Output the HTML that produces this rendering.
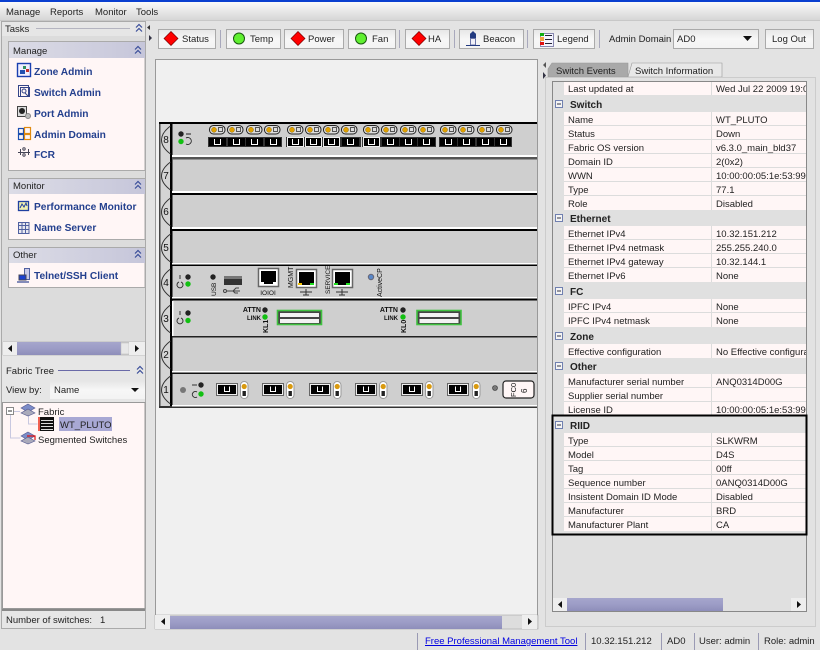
<!DOCTYPE html>
<html><head><meta charset="utf-8"><title>Web Tools</title>
<style>
html,body{margin:0;padding:0}
body{width:820px;height:650px;overflow:hidden;position:relative;background:#e3e3e3;font:9.5px "Liberation Sans",Arial,sans-serif;color:#222}
svg.g{position:absolute;left:0;top:0}
.t{position:absolute;white-space:nowrap;line-height:13px;height:13px;margin-top:1px}
.l{font-weight:bold;color:#24408e;font-size:10.2px}
.h{font-weight:bold;font-size:10px}
svg text{font-family:"Liberation Sans",Arial,sans-serif}
</style></head>
<body>
<svg class="g" width="820" height="650" viewBox="0 0 820 650">
<defs>
<linearGradient id="bar" x1="0" y1="0" x2="0" y2="1"><stop offset="0" stop-color="#fafafa"/><stop offset="1" stop-color="#d6d6d6"/></linearGradient>
<linearGradient id="btn" x1="0" y1="0" x2="0" y2="1"><stop offset="0" stop-color="#e6e6e6"/><stop offset=".5" stop-color="#f7f7f7"/><stop offset="1" stop-color="#f3f3f3"/></linearGradient>
<linearGradient id="hd" x1="0" y1="0" x2="1" y2="0"><stop offset="0" stop-color="#dcdce6"/><stop offset="1" stop-color="#c6c6da"/></linearGradient>
<linearGradient id="th" x1="0" y1="0" x2="0" y2="1"><stop offset="0" stop-color="#a6a6cc"/><stop offset=".5" stop-color="#9c9cc6"/><stop offset="1" stop-color="#8e8eba"/></linearGradient>
<g id="chev"><path d="M-3 -.5l3-3 3 3M-3 3.500l3-3 3 3" fill="none" stroke="#3a4e9a" stroke-width="1.2"/></g>
<g id="cap"><rect x=".5" y=".5" width="15.500" height="8.500" rx="4" fill="#ddd" stroke="#222"/><circle cx="5" cy="4.800" r="2.500" fill="#e0a000" stroke="#8a6a10" stroke-width=".5"/><rect x="9.500" y="2.500" width="4" height="4" fill="none" stroke="#333" stroke-width=".8"/></g>
<g id="u"><path d="M-3 -3.500v5.500h6v-5.500" fill="none" stroke="#fff"/></g>
<g id="ld"><circle r="2.700" fill="#222"/></g>
<g id="gd"><circle r="2.700" fill="#12c012"/></g>
<g id="tab"><path d="M11 0C7 3 2 8 2 14s5 11 9 14" fill="none" stroke="#333"/></g>
<g id="fp"><rect x=".5" y=".5" width="21" height="12" fill="#000" stroke="#666"/><rect x="1.500" y="1.500" width="19" height="10" fill="none" stroke="#eee"/><path d="M8.500 3.500v5h5v-5" fill="none" stroke="#fff"/></g>
<g id="vc"><rect x=".5" y=".5" width="7.500" height="17" rx="3.700" fill="#fff" stroke="#999"/><circle cx="4.200" cy="5.500" r="2.600" fill="#d99a10"/><rect x="2.500" y="10" width="3.400" height="5" fill="#222"/></g>
<g id="q"><rect x=".5" y=".5" width="44" height="14" fill="#444" stroke="#3fc23f" stroke-width="1.600"/><rect x="3" y="3" width="39" height="4" fill="#f2f2f2"/><rect x="3" y="9" width="39" height="4" fill="#f2f2f2"/></g>
<g id="jk"><rect x=".5" y=".5" width="20" height="18" fill="#fff" stroke="#666" stroke-width="1.500"/><path d="M3 3h15v11h-3v2h-9v-2h-3z" fill="#000"/></g>
<path id="dia" d="M0 -7L7 0L0 7L-7 0Z" fill="#f00" stroke="#700" stroke-width=".7"/>
<circle id="grn" r="5.500" fill="#60f030" stroke="#1a5a10"/>
</defs>

<!-- title + menu -->
<rect width="820" height="2" fill="#0a3fd0"/>
<rect y="2" width="820" height="18" fill="url(#bar)"/>
<rect y="20" width="820" height="1" fill="#c8c8c8"/>

<!-- left panel -->
<rect x="1.500" y="21.500" width="144" height="607" fill="#e6e6e6" stroke="#aaa"/>
<rect x="2" y="36" width="143" height="306" fill="#dcdcdc"/>
<line x1="36" y1="28.500" x2="130" y2="28.500" stroke="#b4b4c0"/>
<use href="#chev" x="139" y="28"/>
<rect x="8.500" y="41.500" width="136.500" height="129" fill="#fff6f6" stroke="#aaa"/>
<rect x="9" y="42" width="136" height="16" fill="url(#hd)"/>
<use href="#chev" x="138" y="50"/>
<rect x="8.500" y="178.500" width="136.500" height="61" fill="#fff6f6" stroke="#aaa"/>
<rect x="9" y="179" width="136" height="15" fill="url(#hd)"/>
<use href="#chev" x="138" y="185"/>
<rect x="8.500" y="247.500" width="136.500" height="40" fill="#fff6f6" stroke="#aaa"/>
<rect x="9" y="248" width="136" height="15" fill="url(#hd)"/>
<use href="#chev" x="138" y="254"/>

<!-- task icons -->
<g><rect x="17.500" y="63.500" width="13" height="13" fill="#eef" stroke="#1a3fb0" stroke-width="1.400"/><rect x="20" y="70" width="5" height="4" fill="#2050b0"/><rect x="23" y="66" width="3" height="3" fill="#309060"/><rect x="26" y="69" width="3" height="3" fill="#c03030"/></g>
<g fill="none" stroke="#334488"><rect x="18.500" y="85.500" width="10" height="11"/><rect x="20.500" y="87.500" width="9" height="9"/><circle cx="24" cy="91" r="2"/><path d="M25 93l3 3"/></g>
<g><rect x="17.500" y="106.500" width="9" height="10" fill="#ddd" stroke="#444"/><circle cx="22" cy="111" r="3" fill="#222"/><circle cx="28" cy="116" r="2.500" fill="#bbb" stroke="#888"/></g>
<g fill="none" stroke-width="1.200"><rect x="18.500" y="128.500" width="5" height="5" stroke="#1a4fb0"/><rect x="24.500" y="127.500" width="6" height="6" stroke="#e08a10"/><rect x="18.500" y="134.500" width="5" height="5" stroke="#1a4fb0"/><rect x="24.500" y="134.500" width="6" height="5" stroke="#e08a10"/></g>
<g stroke="#445" fill="none"><path d="M18 152.500h12M20.500 149v6M28.500 149v6"/><circle cx="24" cy="149" r="1.200"/><circle cx="24" cy="155" r="1.200"/></g>
<g fill="none"><rect x="18.500" y="201.500" width="10" height="9" fill="#f0f0b0" stroke="#2040a0" stroke-width="1.300"/><path d="M20 208l2-4 2 3 2-4 1 3" stroke="#2040a0"/></g>
<g fill="#e8e8f0" stroke="#5060a0"><rect x="18.500" y="222.500" width="10.500" height="11"/><path d="M18.500 225.500h10.500M22 222.500v11M25.500 222.500v11M18.500 229.500h10.500" fill="none"/></g>
<g><rect x="24.500" y="268.500" width="5" height="11" fill="#c8c8e8" stroke="#5060a0"/><rect x="19" y="275" width="7" height="5" fill="#1a3fd0" stroke="#445"/><path d="M17 282h12" stroke="#5060a0" stroke-width="1.400"/></g>

<!-- left scrollbar -->
<rect x="3" y="342" width="142" height="13" fill="#ddd" stroke="#999" stroke-width=".5"/>
<rect x="3" y="342" width="14" height="13" fill="#eee"/><path d="M12 345v7l-4-3.500z" fill="#111"/>
<rect x="17" y="342" width="104" height="13" fill="url(#th)"/>
<rect x="121" y="343" width="8" height="11" fill="#e8e8e8" stroke="#bbb" stroke-width=".5"/>
<rect x="129" y="342" width="16" height="13" fill="#eee"/><path d="M135 345v7l4-3.500z" fill="#111"/>
<!-- fabric tree -->
<line x1="58" y1="370.500" x2="130" y2="370.500" stroke="#6a6aa8"/>
<use href="#chev" x="140" y="370"/>
<rect x="50" y="381" width="95" height="18" fill="url(#btn)"/>
<path d="M131 388h8l-4 4z" fill="#111"/>
<rect x="2.500" y="402.500" width="142.500" height="206" fill="#fff6f6" stroke="#999"/>
<rect x="6.500" y="407.500" width="7" height="7" fill="#fff" stroke="#888"/><path d="M8 411h4" stroke="#333"/>
<path d="M14 411.500h6M28.500 415v9h9M10.500 415v23h10" fill="none" stroke="#c8c8e0"/>
<g fill="#7c8cc8" stroke="#555a90" stroke-width=".6"><path d="M28 404l7 4-7 4-7-4z"/><path d="M28 409l7 4-7 3-7-3z" fill="#aab"/></g>
<g fill="#7c8cc8" stroke="#555a90" stroke-width=".6"><path d="M28 432l7 4-7 4-7-4z"/><path d="M28 437l7 4-7 3-7-3z" fill="#aab"/></g>
<path d="M27 436h8v4" fill="none" stroke="#e01010" stroke-width="1.200"/>
<rect x="38" y="417" width="2" height="14" fill="#f06050"/><rect x="40" y="417" width="14" height="14" fill="#111"/><path d="M41 420.500h12M41 423.500h12M41 426.500h12M41 429.500h12" stroke="#ddd"/>
<rect x="59" y="417" width="53" height="14" fill="#a8a8d4"/>
<rect x="2" y="609" width="143" height="2" fill="#888"/>

<!-- toolbar -->
<g fill="url(#btn)" stroke="#aaa">
<rect x="158.500" y="29.500" width="57" height="19"/><rect x="226.500" y="29.500" width="54" height="19"/><rect x="284.500" y="29.500" width="59" height="19"/><rect x="348.500" y="29.500" width="47" height="19"/><rect x="405.500" y="29.500" width="44" height="19"/><rect x="459.500" y="29.500" width="64" height="19"/><rect x="533.500" y="29.500" width="61" height="19"/><rect x="673.500" y="29.500" width="85" height="19"/><rect x="765.500" y="29.500" width="48" height="19"/></g>
<g stroke="#a8a8bc"><path d="M220.500 30v18M399.500 30v18M454.500 30v18M527.500 30v18M599.500 30v18"/></g>
<path d="M150 25v5l-3-2.500z" fill="#333"/><path d="M149 35v6l3-3z" fill="#334"/>
<use href="#dia" x="171" y="38.500"/><use href="#grn" x="239" y="38.500"/><use href="#dia" x="298" y="38.500"/><use href="#grn" x="361" y="38.500"/><use href="#dia" x="419" y="38.500"/>
<g><path d="M473 31l2.500 2.500h-5z" fill="#223a80"/><rect x="470" y="33.500" width="6" height="4.500" fill="#223a80"/><rect x="470.500" y="38.500" width="5" height="6.500" fill="#f0f0f8" stroke="#6a74a8"/><path d="M466 45.500h14" stroke="#223a80"/></g>
<rect x="540.500" y="33.500" width="13" height="13" fill="#f4f4ff" stroke="#8888b0"/><rect x="540" y="33" width="4" height="3" fill="#10b010"/><rect x="540" y="37" width="4" height="4" fill="#f0a040"/><rect x="540" y="42" width="4" height="3" fill="#e01010"/><path d="M545 35.500h7M545 39.500h7M545 43.500h7" stroke="#223"/>
<path d="M743 36h9l-4.500 5z" fill="#111"/>

<!-- center -->
<rect x="155.500" y="59.500" width="382" height="569" fill="#f0f0f0" stroke="#999"/>
<rect x="155" y="615" width="383" height="14" fill="#ddd" stroke="#999" stroke-width=".5"/>
<rect x="155" y="615" width="15" height="14" fill="#eee"/><path d="M165 618v7l-4-3.500z" fill="#111"/>
<rect x="170" y="616" width="332" height="13" fill="url(#th)"/>
<rect x="522" y="615" width="15" height="14" fill="#eee"/><path d="M528 618v7l4-3.500z" fill="#111"/>

<!-- chassis -->
<rect x="159" y="122" width="378" height="286" fill="#cfcfcf"/>
<rect x="159" y="122" width="11" height="286" fill="#d4d4d4"/>
<rect x="159" y="122" width="1.500" height="286" fill="#444"/>
<rect x="159" y="122" width="378" height="2" fill="#000"/>
<rect x="170" y="122" width="2.500" height="286" fill="#000"/>
<rect x="172" y="155" width="365" height="2" fill="#fff"/><rect x="172" y="157" width="365" height="2.500" fill="#555"/>
<rect x="172" y="191" width="365" height="2" fill="#fff"/><rect x="172" y="193" width="365" height="2" fill="#000"/>
<rect x="172" y="227" width="365" height="2" fill="#fff"/><rect x="172" y="229" width="365" height="2" fill="#000"/>
<rect x="172" y="263" width="365" height="1.500" fill="#fff"/><rect x="172" y="264.500" width="365" height="1.500" fill="#000"/>
<rect x="172" y="297" width="365" height="1.500" fill="#fff"/><rect x="172" y="298.500" width="365" height="2" fill="#000"/>
<rect x="172" y="301" width="1.500" height="35" fill="#fff"/>
<rect x="172" y="336" width="365" height="1.500" fill="#222"/>
<rect x="172" y="371" width="365" height="1.500" fill="#fff"/><rect x="172" y="372.500" width="365" height="1.500" fill="#111"/>
<rect x="172" y="405" width="365" height="1.500" fill="#fff"/><rect x="172" y="406.500" width="365" height="1.500" fill="#333"/>
<rect x="159" y="406" width="13" height="2" fill="#333"/>
<g><use href="#tab" x="159.500" y="126"/><use href="#tab" x="159.500" y="162"/><use href="#tab" x="159.500" y="198"/><use href="#tab" x="159.500" y="234"/><use href="#tab" x="159.500" y="269"/><use href="#tab" x="159.500" y="305"/><use href="#tab" x="159.500" y="341"/><use href="#tab" x="159.500" y="376"/></g>
<g font-size="10" fill="#111" text-anchor="middle"><text x="166" y="143">8</text><text x="166" y="179">7</text><text x="166" y="215">6</text><text x="166" y="251">5</text><text x="166" y="286">4</text><text x="166" y="322">3</text><text x="166" y="358">2</text><text x="166" y="393">1</text></g>

<!-- slot 8 -->
<use href="#ld" x="181" y="134"/><use href="#gd" x="181" y="141.500"/>
<path d="M186 134h5M186 138a3.500 3.500 0 1 1 0 6" fill="none" stroke="#222" stroke-width=".9"/>
<g><use href="#cap" x="209" y="125"/><use href="#cap" x="227" y="125"/><use href="#cap" x="246" y="125"/><use href="#cap" x="264" y="125"/><use href="#cap" x="287" y="125"/><use href="#cap" x="305" y="125"/><use href="#cap" x="323" y="125"/><use href="#cap" x="341" y="125"/><use href="#cap" x="363" y="125"/><use href="#cap" x="381" y="125"/><use href="#cap" x="400" y="125"/><use href="#cap" x="418" y="125"/><use href="#cap" x="440" y="125"/><use href="#cap" x="458" y="125"/><use href="#cap" x="477" y="125"/><use href="#cap" x="496" y="125"/></g>
<rect x="208" y="137" width="74" height="10" fill="#333"/>
<rect x="286" y="137" width="75" height="10" fill="#333"/>
<rect x="362" y="137" width="74" height="10" fill="#333"/>
<rect x="439" y="137" width="73" height="10" fill="#333"/>
<g fill="#000"><rect x="209" y="138" width="17" height="8"/><rect x="228" y="138" width="17" height="8"/><rect x="246" y="138" width="17" height="8"/><rect x="265" y="138" width="16" height="8"/><rect x="287.500" y="137.500" width="16" height="9" stroke="#eee"/><rect x="305.500" y="137.500" width="16" height="9" stroke="#eee"/><rect x="323.500" y="137.500" width="16" height="9" stroke="#eee"/><rect x="342" y="138" width="17" height="8"/><rect x="363.500" y="137.500" width="16" height="9" stroke="#eee"/><rect x="382" y="138" width="17" height="8"/><rect x="400" y="138" width="17" height="8"/><rect x="418" y="138" width="17" height="8"/><rect x="440" y="138" width="17" height="8"/><rect x="458" y="138" width="17" height="8"/><rect x="477" y="138" width="17" height="8"/><rect x="495" y="138" width="16" height="8"/></g>
<g><use href="#u" x="217.500" y="142.500"/><use href="#u" x="236.500" y="142.500"/><use href="#u" x="254.500" y="142.500"/><use href="#u" x="273.500" y="142.500"/><use href="#u" x="295.500" y="142.500"/><use href="#u" x="313.500" y="142.500"/><use href="#u" x="331.500" y="142.500"/><use href="#u" x="350.500" y="142.500"/><use href="#u" x="371.500" y="142.500"/><use href="#u" x="390.500" y="142.500"/><use href="#u" x="408.500" y="142.500"/><use href="#u" x="426.500" y="142.500"/><use href="#u" x="448.500" y="142.500"/><use href="#u" x="466.500" y="142.500"/><use href="#u" x="485.500" y="142.500"/><use href="#u" x="503.500" y="142.500"/></g>

<!-- slot 4 -->
<use href="#ld" x="188" y="277"/><use href="#gd" x="188" y="284"/>
<path d="M180 275v4M181 282a3 3 0 1 1-2 0" fill="none" stroke="#333"/>
<use href="#ld" x="213" y="277"/>
<text transform="translate(216 296) rotate(-90)" font-size="6.500" fill="#111">USB</text>
<rect x="224" y="276" width="18" height="9" fill="#333"/><rect x="224" y="276" width="18" height="3" fill="#777"/>
<path d="M226 291h14M233 291l3-3h3M233 291l2 2h3" fill="none" stroke="#444"/><circle cx="225" cy="291" r="1.500" fill="none" stroke="#444"/>
<use href="#jk" x="258" y="268"/>
<text x="268" y="295" font-size="6.500" text-anchor="middle" fill="#111">IOIOI</text>
<text transform="translate(293 288) rotate(-90)" font-size="7" fill="#111">MGMT</text>
<use href="#jk" x="296" y="269"/><rect x="298" y="283" width="4" height="2" fill="#f0c000"/><rect x="310" y="283" width="4" height="2" fill="#20e020"/>
<path d="M300 292h12M306 289v6M303 295h6" fill="none" stroke="#333"/>
<text transform="translate(330 294) rotate(-90)" font-size="6.500" fill="#111">SERVICE</text>
<use href="#jk" x="332" y="269"/><rect x="334" y="283" width="4" height="2" fill="#20e020"/><rect x="346" y="283" width="4" height="2" fill="#20e020"/>
<path d="M336 292h12M342 289v6M339 295h6" fill="none" stroke="#333"/>
<circle cx="371" cy="277" r="2.700" fill="#5a88c8" stroke="#667"/>
<text transform="translate(382 297) rotate(-90)" font-size="7" fill="#111">ActiveCP</text>

<!-- slot 3 -->
<use href="#ld" x="188" y="313"/><use href="#gd" x="188" y="320.500"/>
<path d="M180 311v4M181 318a3 3 0 1 1-2 0" fill="none" stroke="#333"/>
<text x="261" y="312" font-size="7" text-anchor="end" font-weight="bold" fill="#111">ATTN</text>
<text x="261" y="320" font-size="6" text-anchor="end" font-weight="bold" fill="#111">LINK</text>
<use href="#ld" x="265" y="310"/><use href="#gd" x="265" y="317"/>
<text transform="translate(268 333) rotate(-90)" font-size="7" font-weight="bold" fill="#111">KL1</text>
<use href="#q" x="277" y="310"/>
<text x="398" y="312" font-size="7" text-anchor="end" font-weight="bold" fill="#111">ATTN</text>
<text x="398" y="320" font-size="6" text-anchor="end" font-weight="bold" fill="#111">LINK</text>
<use href="#ld" x="403" y="310"/><use href="#gd" x="403" y="317"/>
<text transform="translate(406 333) rotate(-90)" font-size="7" font-weight="bold" fill="#111">KL0</text>
<use href="#q" x="416.500" y="310"/>

<!-- slot 1 -->
<circle cx="183" cy="390" r="3" fill="#777"/>
<use href="#ld" x="201" y="385"/><use href="#gd" x="201" y="394"/>
<path d="M192 385h5M197 392a3 3 0 1 0 0 5" fill="none" stroke="#333"/>
<use href="#fp" x="216" y="383"/><use href="#vc" x="240" y="381"/>
<use href="#fp" x="262" y="383"/><use href="#vc" x="286" y="381"/>
<use href="#fp" x="309" y="383"/><use href="#vc" x="333" y="381"/>
<use href="#fp" x="355" y="383"/><use href="#vc" x="379" y="381"/>
<use href="#fp" x="401" y="383"/><use href="#vc" x="425" y="381"/>
<use href="#fp" x="447" y="383"/><use href="#vc" x="472" y="381"/>
<circle cx="495" cy="388" r="2.500" fill="#777" stroke="#333" stroke-width=".6"/>
<rect x="503" y="381" width="31" height="17" rx="3" fill="#fff6f6" stroke="#222" stroke-width="1.200"/>
<text transform="translate(516 397) rotate(-90)" font-size="7.500" fill="#111">FC0</text>
<text transform="translate(527 393) rotate(-90)" font-size="8" fill="#111">6</text>

<!-- right panel -->
<path d="M546 62v6l-3-3z" fill="#555"/><path d="M543 72v7l3-3.500z" fill="#334"/>
<path d="M548 77v-8l4-6h76v14z" fill="#a9a9a9" stroke="#999" stroke-width=".6"/>
<path d="M628 77l4-14h90v14z" fill="#e8e8e8" stroke="#999" stroke-width=".6"/>
<rect x="545.500" y="77.500" width="270" height="549" fill="#e2e2e2" stroke="#ccc"/>
<rect x="552.500" y="81.500" width="254" height="530" fill="#e0e0e0" stroke="#888"/>
<g fill="#fff6f6"><rect x="564" y="82" width="242" height="13"/>
<rect x="564" y="112" width="242" height="98"/>
<rect x="564" y="226" width="242" height="56"/>
<rect x="564" y="299" width="242" height="28"/>
<rect x="564" y="344" width="242" height="14"/>
<rect x="564" y="374" width="242" height="41"/>
<rect x="564" y="433" width="242" height="98"/></g>
<g stroke="#dcdcdc"><path d="M564 125.500h242M564 139.500h242M564 153.500h242M564 167.500h242M564 181.500h242M564 195.500h242M564 239.500h242M564 253.500h242M564 267.500h242M564 312.500h242M564 387.500h242M564 401.500h242M564 446.500h242M564 460.500h242M564 474.500h242M564 488.500h242M564 502.500h242M564 516.500h242"/>
<path d="M711.500 82v13M711.500 112v98M711.500 226v56M711.500 299v28M711.500 344v14M711.500 374v41M711.500 433v98"/></g>
<g fill="#f4f4f4" stroke="#7080b0"><rect x="555.500" y="100.500" width="7" height="7"/><rect x="555.500" y="214.500" width="7" height="7"/><rect x="555.500" y="287.500" width="7" height="7"/><rect x="555.500" y="332.500" width="7" height="7"/><rect x="555.500" y="362.500" width="7" height="7"/><rect x="555.500" y="421.500" width="7" height="7"/></g>
<path d="M557 104h4M557 218h4M557 291h4M557 336h4M557 366h4M557 425h4" stroke="#334"/>
<rect x="552.500" y="415.500" width="254" height="119" fill="none" stroke="#000" stroke-width="2"/>
<rect x="553" y="598" width="253" height="13" fill="#e0e0e0"/>
<rect x="553" y="598" width="14" height="13" fill="#eee"/><path d="M562 601v7l-4-3.500z" fill="#111"/>
<rect x="567" y="598" width="156" height="13" fill="url(#th)"/>
<rect x="791" y="598" width="15" height="13" fill="#eee"/><path d="M797 601v7l4-3.500z" fill="#111"/>

<!-- statusbar -->
<g stroke="#9a9ab4"><path d="M417.500 633v17M585.500 633v17M661.500 633v17M694.500 633v17M758.500 633v17"/></g>
</svg>

<div class="t" style="left:6px;top:5px">Manage</div>
<div class="t" style="left:50px;top:5px">Reports</div>
<div class="t" style="left:95px;top:5px">Monitor</div>
<div class="t" style="left:136px;top:5px">Tools</div>
<div class="t" style="left:5px;top:22px">Tasks</div>
<div class="t" style="left:13px;top:44px">Manage</div>
<div class="t l" style="left:34px;top:65px">Zone Admin</div>
<div class="t l" style="left:34px;top:86px">Switch Admin</div>
<div class="t l" style="left:34px;top:107px">Port Admin</div>
<div class="t l" style="left:34px;top:128px">Admin Domain</div>
<div class="t l" style="left:34px;top:148px">FCR</div>
<div class="t" style="left:13px;top:179px">Monitor</div>
<div class="t l" style="left:34px;top:200px">Performance Monitor</div>
<div class="t l" style="left:34px;top:221px">Name Server</div>
<div class="t" style="left:13px;top:248px">Other</div>
<div class="t l" style="left:34px;top:269px">Telnet/SSH Client</div>
<div class="t" style="left:6px;top:364px">Fabric Tree</div>
<div class="t" style="left:6px;top:383px">View by:</div>
<div class="t" style="left:54px;top:383px">Name</div>
<div class="t" style="left:38px;top:405px">Fabric</div>
<div class="t" style="left:60px;top:418px">WT_PLUTO</div>
<div class="t" style="left:38px;top:433px">Segmented Switches</div>
<div class="t" style="left:6px;top:613px">Number of switches:&nbsp;&nbsp;&nbsp;1</div>

<div class="t" style="left:182px;top:32px">Status</div>
<div class="t" style="left:250px;top:32px">Temp</div>
<div class="t" style="left:308px;top:32px">Power</div>
<div class="t" style="left:372px;top:32px">Fan</div>
<div class="t" style="left:428px;top:32px">HA</div>
<div class="t" style="left:483px;top:32px">Beacon</div>
<div class="t" style="left:557px;top:32px">Legend</div>
<div class="t" style="left:609px;top:32px">Admin Domain</div>
<div class="t" style="left:677px;top:32px">AD0</div>
<div class="t" style="left:772px;top:32px">Log Out</div>

<div class="t" style="left:556px;top:64px">Switch Events</div>
<div class="t" style="left:635px;top:64px">Switch Information</div>

<div class="t" style="left:568px;top:82px">Last updated at</div><div class="t" style="left:716px;top:82px;width:90px;overflow:hidden">Wed Jul 22 2009 19:00</div>
<div class="t h" style="left:570px;top:98px">Switch</div>
<div class="t" style="left:568px;top:113px">Name</div><div class="t" style="left:716px;top:113px">WT_PLUTO</div>
<div class="t" style="left:568px;top:127px">Status</div><div class="t" style="left:716px;top:127px">Down</div>
<div class="t" style="left:568px;top:141px">Fabric OS version</div><div class="t" style="left:716px;top:141px">v6.3.0_main_bld37</div>
<div class="t" style="left:568px;top:155px">Domain ID</div><div class="t" style="left:716px;top:155px">2(0x2)</div>
<div class="t" style="left:568px;top:169px">WWN</div><div class="t" style="left:716px;top:169px;width:90px;overflow:hidden">10:00:00:05:1e:53:99:00</div>
<div class="t" style="left:568px;top:183px">Type</div><div class="t" style="left:716px;top:183px">77.1</div>
<div class="t" style="left:568px;top:197px">Role</div><div class="t" style="left:716px;top:197px">Disabled</div>
<div class="t h" style="left:570px;top:212px">Ethernet</div>
<div class="t" style="left:568px;top:227px">Ethernet IPv4</div><div class="t" style="left:716px;top:227px">10.32.151.212</div>
<div class="t" style="left:568px;top:241px">Ethernet IPv4 netmask</div><div class="t" style="left:716px;top:241px">255.255.240.0</div>
<div class="t" style="left:568px;top:255px">Ethernet IPv4 gateway</div><div class="t" style="left:716px;top:255px">10.32.144.1</div>
<div class="t" style="left:568px;top:269px">Ethernet IPv6</div><div class="t" style="left:716px;top:269px">None</div>
<div class="t h" style="left:570px;top:285px">FC</div>
<div class="t" style="left:568px;top:300px">IPFC IPv4</div><div class="t" style="left:716px;top:300px">None</div>
<div class="t" style="left:568px;top:314px">IPFC IPv4 netmask</div><div class="t" style="left:716px;top:314px">None</div>
<div class="t h" style="left:570px;top:330px">Zone</div>
<div class="t" style="left:568px;top:345px">Effective configuration</div><div class="t" style="left:716px;top:345px;width:90px;overflow:hidden">No Effective configuration</div>
<div class="t h" style="left:570px;top:360px">Other</div>
<div class="t" style="left:568px;top:375px">Manufacturer serial number</div><div class="t" style="left:716px;top:375px">ANQ0314D00G</div>
<div class="t" style="left:568px;top:389px">Supplier serial number</div>
<div class="t" style="left:568px;top:403px">License ID</div><div class="t" style="left:716px;top:403px;width:90px;overflow:hidden">10:00:00:05:1e:53:99:00</div>
<div class="t h" style="left:570px;top:419px">RIID</div>
<div class="t" style="left:568px;top:434px">Type</div><div class="t" style="left:716px;top:434px">SLKWRM</div>
<div class="t" style="left:568px;top:448px">Model</div><div class="t" style="left:716px;top:448px">D4S</div>
<div class="t" style="left:568px;top:462px">Tag</div><div class="t" style="left:716px;top:462px">00ff</div>
<div class="t" style="left:568px;top:476px">Sequence number</div><div class="t" style="left:716px;top:476px">0ANQ0314D00G</div>
<div class="t" style="left:568px;top:490px">Insistent Domain ID Mode</div><div class="t" style="left:716px;top:490px">Disabled</div>
<div class="t" style="left:568px;top:504px">Manufacturer</div><div class="t" style="left:716px;top:504px">BRD</div>
<div class="t" style="left:568px;top:518px">Manufacturer Plant</div><div class="t" style="left:716px;top:518px">CA</div>

<div class="t" style="left:425px;top:634px;color:#0000e0;text-decoration:underline">Free Professional Management Tool</div>
<div class="t" style="left:591px;top:634px">10.32.151.212</div>
<div class="t" style="left:667px;top:634px">AD0</div>
<div class="t" style="left:699px;top:634px">User: admin</div>
<div class="t" style="left:764px;top:634px">Role: admin</div>
</body></html>
